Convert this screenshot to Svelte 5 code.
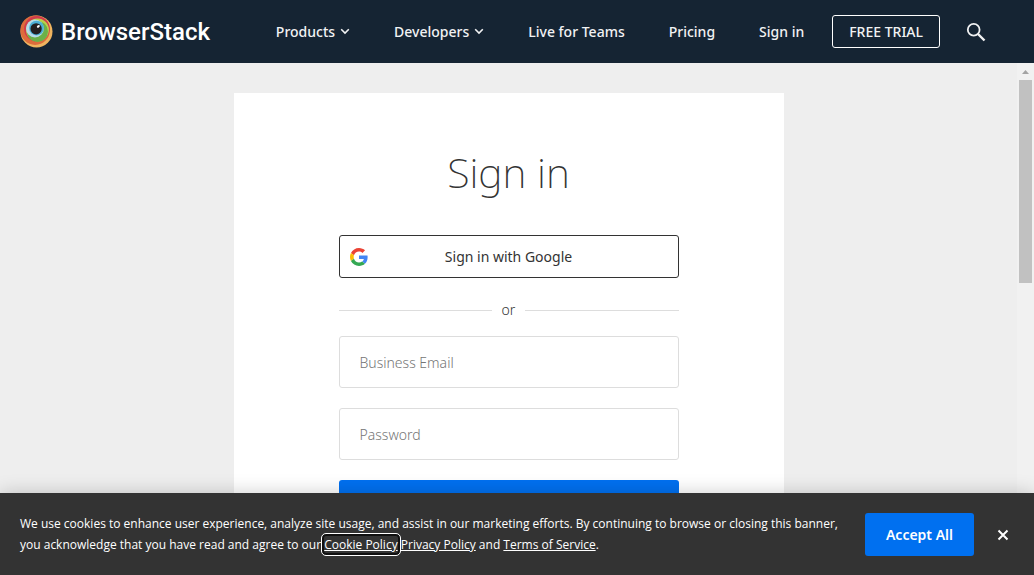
<script>
  let email = $state('');
  let password = $state('');
</script>

<div class="page">
  <header>
    <a class="brand" href="#home">
      <svg width="33" height="33" viewBox="0 0 34 34" aria-hidden="true">
        <circle cx="17" cy="17" r="16.5" fill="#efb45f" />
        <circle cx="15.6" cy="15.6" r="15.2" fill="#dd6c3c" />
        <circle cx="17.4" cy="14.2" r="13.2" fill="#d13b4b" />
        <circle cx="18" cy="15.4" r="11.8" fill="#b9cf4b" />
        <circle cx="18" cy="17" r="10.8" fill="#6bb148" />
        <circle cx="15.4" cy="13.9" r="9.200" fill="#b8dbe8" />
        <circle cx="17" cy="13.4" r="7.6" fill="#4cb0d6" />
        <circle cx="16.6" cy="14.2" r="5.8" fill="#231f20" />
        <ellipse cx="18.9" cy="11.7" rx="1.7" ry="1.2" transform="rotate(-40 18.9 11.7)" fill="#fff" />
      </svg>
      <span>BrowserStack</span>
    </a>
    <nav>
      <button class="item">Products
        <svg width="10" height="7" viewBox="0 0 10 7" aria-hidden="true"><path d="M1.2 1.2 5 5l3.800-3.800" /></svg>
      </button>
      <button class="item">Developers
        <svg width="10" height="7" viewBox="0 0 10 7" aria-hidden="true"><path d="M1.2 1.2 5 5l3.800-3.800" /></svg>
      </button>
      <a class="item" href="#live">Live for Teams</a>
      <a class="item" href="#pricing">Pricing</a>
      <a class="item" href="#signin">Sign in</a>
    </nav>
    <a class="trial" href="#trial">FREE TRIAL</a>
    <button class="search" aria-label="Search">
      <svg width="20" height="20" viewBox="0 0 20 20" fill="none" stroke="#f1f2f3" aria-hidden="true">
        <circle cx="7.700" cy="7.700" r="5.900" stroke-width="1.800" />
        <path d="m12 12 6.500 6.500" stroke-width="2.400" />
      </svg>
    </button>
  </header>

  <div class="body">
    <main>
      <form onsubmit={(e) => e.preventDefault()}>
        <h1>Sign in</h1>
        <button type="button" class="google">
          <svg width="18" height="18" viewBox="0 0 48 48" aria-hidden="true">
            <path fill="#EA4335" d="M24 9.500c3.540 0 6.710 1.220 9.210 3.600l6.850-6.850C35.900 2.380 30.470 0 24 0 14.620 0 6.510 5.380 2.560 13.220l7.980 6.190C12.430 13.720 17.740 9.500 24 9.500z" />
            <path fill="#4285F4" d="M46.980 24.550c0-1.570-.15-3.090-.38-4.550H24v9.020h12.940c-.58 2.960-2.260 5.480-4.780 7.180l7.730 6c4.510-4.180 7.090-10.360 7.090-17.650z" />
            <path fill="#FBBC05" d="M10.530 28.590c-.48-1.450-.76-2.990-.76-4.590s.27-3.140.76-4.590l-7.980-6.190C.92 16.460 0 20.120 0 24c0 3.880.92 7.540 2.560 10.780l7.970-6.190z" />
            <path fill="#34A853" d="M24 48c6.480 0 11.930-2.130 15.890-5.810l-7.730-6c-2.150 1.450-4.920 2.300-8.160 2.300-6.260 0-11.570-4.220-13.470-9.910l-7.980 6.190C6.510 42.620 14.620 48 24 48z" />
          </svg>
          <span>Sign in with Google</span>
        </button>
        <div class="or">or</div>
        <input type="email" aria-label="Business Email" placeholder="Business Email" bind:value={email} />
        <input type="password" aria-label="Password" placeholder="Password" bind:value={password} />
        <button class="submit" aria-label="Submit"></button>
      </form>
    </main>
    <div class="track" aria-hidden="true">
      <svg width="7" height="4" viewBox="0 0 7 4"><path d="M3.500 0 7 4H0z" fill="#a3a3a3" /></svg>
      <div class="thumb"></div>
    </div>
  </div>

  <section class="cookies" aria-label="Cookies">
    <p>
      We use cookies to enhance user experience, analyze site usage, and assist in our marketing efforts. By continuing to browse or closing this banner, you acknowledge that you have read and agree to our <a class="focus" href="#cookie">Cookie Policy</a> <a href="#privacy">Privacy Policy</a> and <a href="#terms">Terms of Service</a>.
    </p>
    <button class="accept">Accept All</button>
    <button class="close" aria-label="Close">
      <svg width="12" height="12" viewBox="0 0 12 12" aria-hidden="true"><path d="m1.500 1.500 9 9m0-9-9 9" stroke="#fff" stroke-width="2" /></svg>
    </button>
  </section>
</div>

<style>
  :global(body) { margin: 0; }
  .page, .page * { box-sizing: border-box; }
  .page {
    height: 100vh;
    display: flex;
    flex-direction: column;
    font-family: "Noto Sans", "Open Sans", sans-serif;
    font-size: 14px;
    color: #333;
    background: #eee;
  }
  button, input { font: inherit; }
  button { padding: 0; border: 0; background: none; color: inherit; cursor: pointer; }
  a { color: inherit; text-decoration: none; }
  svg { flex: none; }

  header {
    flex: none;
    height: 63px;
    padding: 0 48px 0 20px;
    display: flex;
    align-items: center;
    background: #152433;
    color: #f1f2f3;
    white-space: nowrap;
  }
  .brand {
    display: flex;
    align-items: center;
    gap: 8px;
    color: #fff;
    font: 500 24px/32px Roboto, sans-serif;
  }
  nav { display: flex; gap: 44px; margin-left: auto; }
  .item, .trial { font-weight: 500; line-height: 23px; }
  .item { display: flex; align-items: center; gap: 5px; }
  .item path { fill: none; stroke: #f1f2f3; stroke-width: 1.6; }
  .trial {
    margin-left: 28px;
    padding: 4px 16px;
    border: 1px solid #fff;
    border-radius: 3px;
  }
  .search { margin-left: 26px; height: 20px; display: flex; }

  .body { flex: 1; min-height: 0; display: flex; overflow: hidden; }
  main { flex: 1; padding-top: 30px; }
  form {
    max-width: 550px;
    margin: 0 auto;
    padding: 49px 105px;
    height: 600px;
    display: flex;
    flex-direction: column;
    background: #fff;
  }
  h1 { margin: 0 0 33px; font-size: 41px; line-height: 60px; font-weight: 200; text-align: center; }
  .google {
    height: 43px;
    padding: 0 10px;
    display: flex;
    align-items: center;
    border: 1px solid #333;
    border-radius: 3px;
  }
  .google span { flex: 1; padding-right: 18px; }
  .or { display: flex; align-items: center; gap: 10px; margin: 22px 0 16px; line-height: 20px; font-weight: 300; }
  .or::before, .or::after { content: ""; flex: 1; height: 1px; background: #ddd; }
  input {
    flex: none;
    height: 52px;
    margin-bottom: 20px;
    padding: 0 20px;
    border: 1px solid #ddd;
    border-radius: 3px;
    font-weight: 300;
    background: #fff;
  }
  input::placeholder { color: #757575; opacity: 1; }
  .submit { height: 50px; border-radius: 3px; background: #0070f0; }
  .track {
    width: 17px;
    padding-top: 7px;
    display: flex;
    flex-direction: column;
    align-items: center;
    gap: 6px;
    background: #f1f1f1;
  }
  .thumb { width: 13px; height: 203px; background: #c1c1c1; }

  .cookies {
    position: relative;
    flex: none;
    padding: 20px 25px 19px 20px;
    display: flex;
    align-items: center;
    background: #333;
    color: #fff;
    box-shadow: 0 0 18px rgba(0, 0, 0, 0.2);
  }
  p {
    flex: 1;
    align-self: flex-start;
    margin: 0;
    font: 375 12px/21px "Open Sans", "Noto Sans", sans-serif;
  }
  p a { text-decoration: underline; }
  .focus { outline: 1px solid #fff; outline-offset: 2px; box-shadow: 0 0 0 2px #101010; border-radius: 2px; }
  .accept {
    flex: none;
    width: 109px;
    height: 43px;
    margin-left: 20px;
    border-radius: 3px;
    background: #0070f0;
    font-weight: 600;
  }
  .close { margin-left: 23px; height: 12px; display: flex; }
</style>
